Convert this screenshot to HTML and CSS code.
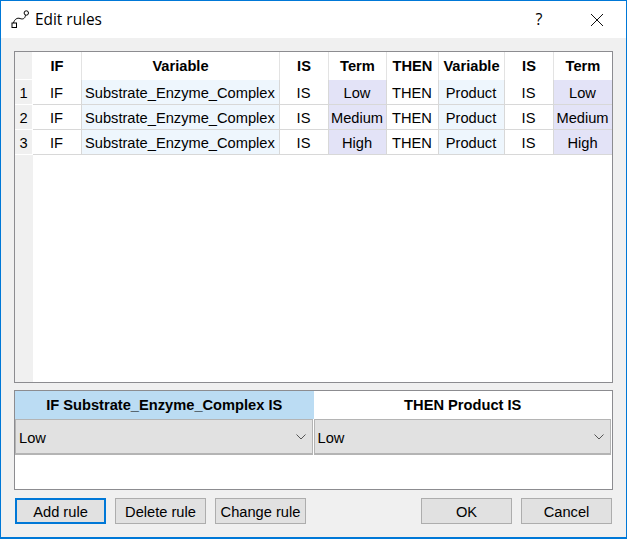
FILE: index.html
```html
<!DOCTYPE html>
<html lang="en">
<head>
  <meta charset="UTF-8">
  <title>Edit rules</title>
  <link rel="stylesheet" href="styles.css">
</head>
<body>

  <div class="window">

    <div class="titlebar">
      <svg class="app-icon" width="20" height="20" viewBox="0 0 20 20">
        <rect x="2" y="14" width="4.5" height="4.5" fill="none" stroke="#000"/>
        <path d="M3.5 14 C4.5 10 7.5 8.5 10 9.5 C12.5 10.5 15 10 15.5 6.2" fill="none" stroke="#000"/>
        <circle cx="16.3" cy="4" r="2.2" fill="none" stroke="#000"/>
      </svg>
      <span class="title">Edit rules</span>
      <span class="help">?</span>
      <svg class="close" width="14" height="14" viewBox="0 0 14 14">
        <path d="M1 1 L13 13 M13 1 L1 13" stroke="#111" stroke-width="1" fill="none"/>
      </svg>
    </div>

    <div class="content">

      <div class="grid-frame">
        <table class="rules">
          <colgroup>
            <col class="c-head"><col class="c-if"><col class="c-var"><col class="c-is"><col class="c-term">
            <col class="c-then"><col class="c-var2"><col class="c-is"><col class="c-term">
          </colgroup>
          <thead>
            <tr>
              <th class="rowhead"></th>
              <th>IF</th><th>Variable</th><th>IS</th><th>Term</th>
              <th>THEN</th><th>Variable</th><th>IS</th><th>Term</th>
            </tr>
          </thead>
          <tbody>
            <tr>
              <td class="rowhead">1</td>
              <td>IF</td><td class="var left">Substrate_Enzyme_Complex</td><td>IS</td><td class="term">Low</td>
              <td>THEN</td><td class="var">Product</td><td>IS</td><td class="term">Low</td>
            </tr>
            <tr>
              <td class="rowhead">2</td>
              <td>IF</td><td class="var left">Substrate_Enzyme_Complex</td><td>IS</td><td class="term">Medium</td>
              <td>THEN</td><td class="var">Product</td><td>IS</td><td class="term">Medium</td>
            </tr>
            <tr>
              <td class="rowhead">3</td>
              <td>IF</td><td class="var left">Substrate_Enzyme_Complex</td><td>IS</td><td class="term">High</td>
              <td>THEN</td><td class="var">Product</td><td>IS</td><td class="term">High</td>
            </tr>
          </tbody>
        </table>
        <div class="grid-empty"><div class="rowhead-fill"></div></div>
      </div>

      <div class="editor">
        <div class="editor-col">
          <div class="editor-head active">IF Substrate_Enzyme_Complex IS</div>
          <div class="combo"><span class="combo-text">Low</span>
            <svg width="10" height="6" viewBox="0 0 10 6"><path d="M0.5 0.5 L5 5 L9.5 0.5" fill="none" stroke="#555"/></svg>
          </div>
        </div>
        <div class="editor-col">
          <div class="editor-head">THEN Product IS</div>
          <div class="combo"><span class="combo-text">Low</span>
            <svg width="10" height="6" viewBox="0 0 10 6"><path d="M0.5 0.5 L5 5 L9.5 0.5" fill="none" stroke="#555"/></svg>
          </div>
        </div>
      </div>

      <div class="buttons">
        <button class="btn default">Add rule</button>
        <button class="btn">Delete rule</button>
        <button class="btn">Change rule</button>
        <div class="spacer"></div>
        <button class="btn">OK</button>
        <button class="btn">Cancel</button>
      </div>

    </div>
  </div>

</body>
</html>
```

FILE: styles.css
```css
html, body {
  margin: 0;
  height: 100%;
}
body {
  font-family: "Liberation Sans", Arial, sans-serif;
  font-size: 14.67px;
  color: #000;
  background-color: #f0f0f0;
}

.window {
  box-sizing: border-box;
  width: 627px;
  height: 539px;
  border: 1px solid #0078d7;
  border-bottom-width: 2px;
  display: flex;
  flex-direction: column;
}

/* Title bar */
.titlebar {
  height: 37px;
  flex: none;
  background-color: #fff;
  display: flex;
  align-items: center;
  padding-left: 9px;
}
.app-icon {
  margin-right: 5px;
  margin-top: -1px;
}
.title {
  flex: 1;
  font-family: "Open Sans", "Noto Sans", sans-serif;
  font-size: 15.4px;
  padding-bottom: 1px;
}
.help {
  width: 20px;
  font-size: 16px;
  text-align: center;
  margin-right: 41px;
  font-family: "Open Sans", sans-serif;
  padding-bottom: 2px;
}
.close {
  margin-right: 22px;
}

/* Body of the dialog */
.content {
  flex: 1;
  padding: 13px 13px 0 13px;
  display: flex;
  flex-direction: column;
}

.grid-frame {
  box-sizing: border-box;
  width: 599px;
  height: 332px;
  border: 1px solid #8c8c90;
  background-color: #fff;
  display: flex;
  flex-direction: column;
}
.rules {
  border-collapse: separate;
  border-spacing: 0;
  table-layout: fixed;
  width: 597px;
  flex: none;
}
.c-head { width: 18px; }
.c-if { width: 49px; }
.c-var { width: 198px; }
.c-is { width: 49px; }
.c-term { width: 58px; }
.c-then { width: 52px; }
.c-var2 { width: 66px; }

.rules th {
  box-sizing: border-box;
  height: 28px;
  padding: 0;
  font-weight: bold;
  border-right: 1px solid #e3e3e3;
}
.rules td {
  box-sizing: border-box;
  height: 25px;
  padding: 1px 1px 0 0;
  text-align: center;
  white-space: nowrap;
  border-right: 1px solid #d8d8d8;
  border-bottom: 1px solid #d8d8d8;
}
.rules th:last-child,
.rules td:last-child {
  border-right: none;
}
.rules .rowhead {
  background-color: #f0f0f0;
  padding-right: 0;
  border-right: 1px solid #fff;
  border-bottom: 1px solid #fff;
}
.rules .var { background-color: #eef6fd; }
.rules .term { background-color: #e3e3f7; }
.rules .left {
  text-align: left;
  padding-left: 3px;
}

.grid-empty {
  flex: 1;
}
.rowhead-fill {
  width: 18px;
  height: 100%;
  background-color: #f0f0f0;
}

/* Rule editor */
.editor {
  box-sizing: border-box;
  width: 599px;
  height: 100px;
  margin-top: 7px;
  border: 1px solid #8c8c90;
  background-color: #fff;
  display: flex;
}
.editor-col {
  flex: 1;
}
.editor-head {
  height: 28px;
  line-height: 28px;
  text-align: center;
  font-weight: bold;
}
.editor-head.active {
  background-color: #bbdcf3;
}
.combo {
  box-sizing: border-box;
  height: 36px;
  margin-right: 1px;
  border: 1px solid #b4b4b4;
  border-bottom-width: 2px;
  background-color: #e1e1e1;
  display: flex;
  align-items: center;
  justify-content: space-between;
  padding: 1px 6px 0 3px;
}
.combo-text {
  padding-top: 1px;
}

/* Button row */
.buttons {
  display: flex;
  margin-top: 8px;
  padding: 0 1px;
  gap: 9px;
}
.spacer {
  flex: 1;
}
.btn {
  box-sizing: border-box;
  width: 91px;
  height: 26px;
  padding: 1px 0 0 0;
  font: inherit;
  color: #000;
  background-color: #e1e1e1;
  border: 1px solid #adadad;
}
.btn.default {
  border: 2px solid #0078d7;
}
```
